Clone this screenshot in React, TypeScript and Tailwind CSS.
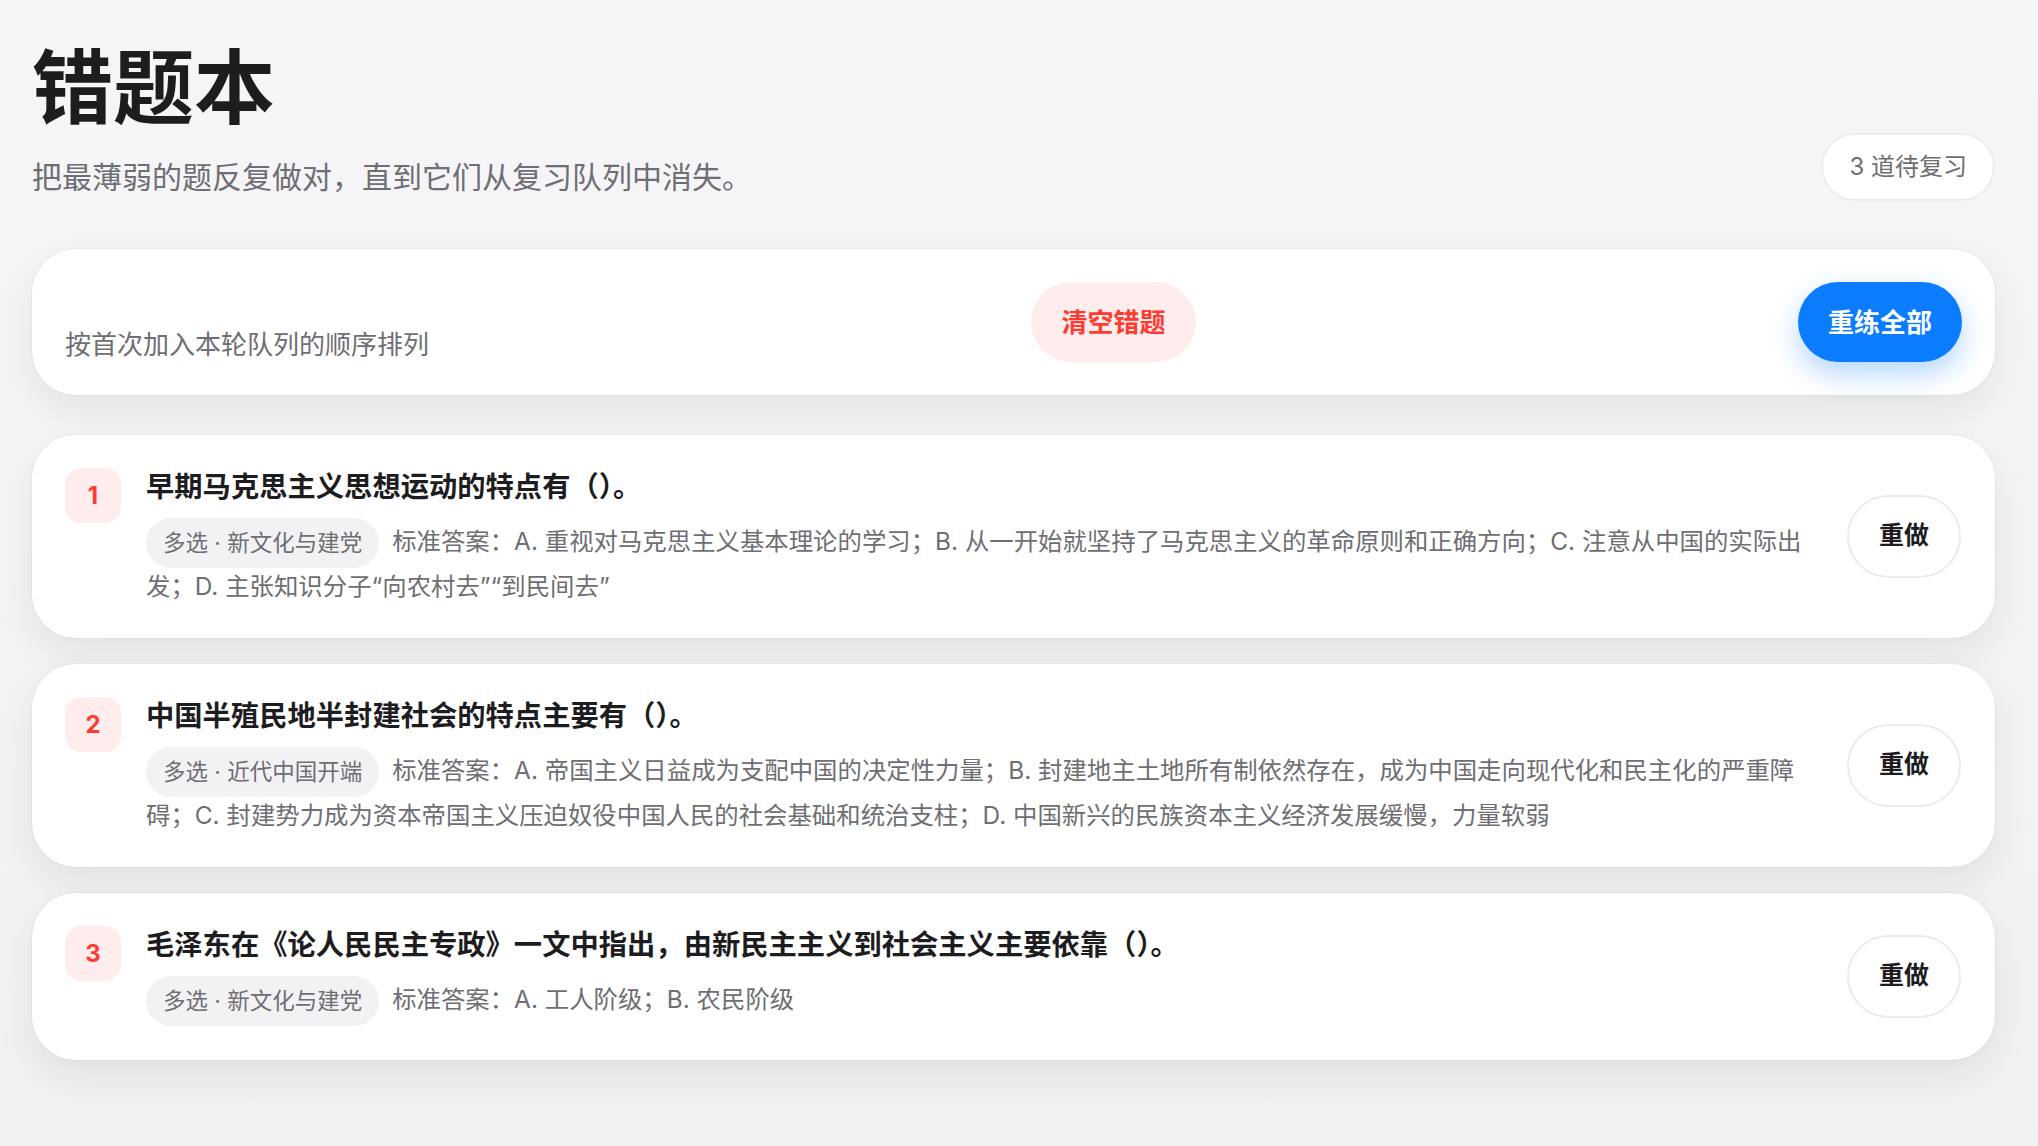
import * as React from "react"

interface Mistake {
  id: number
  title: string
  tag: string
  answer: string
}

const mistakes: Mistake[] = [
  {
    id: 1,
    title: "早期马克思主义思想运动的特点有（）。",
    tag: "多选 · 新文化与建党",
    answer:
      "标准答案：A. 重视对马克思主义基本理论的学习；B. 从一开始就坚持了马克思主义的革命原则和正确方向；C. 注意从中国的实际出发；D. 主张知识分子“向农村去”“到民间去”",
  },
  {
    id: 2,
    title: "中国半殖民地半封建社会的特点主要有（）。",
    tag: "多选 · 近代中国开端",
    answer:
      "标准答案：A. 帝国主义日益成为支配中国的决定性力量；B. 封建地主土地所有制依然存在，成为中国走向现代化和民主化的严重障碍；C. 封建势力成为资本帝国主义压迫奴役中国人民的社会基础和统治支柱；D. 中国新兴的民族资本主义经济发展缓慢，力量软弱",
  },
  {
    id: 3,
    title: "毛泽东在《论人民民主专政》一文中指出，由新民主主义到社会主义主要依靠（）。",
    tag: "多选 · 新文化与建党",
    answer: "标准答案：A. 工人阶级；B. 农民阶级",
  },
]

const cardShadow = "shadow-[0_16px_40px_rgba(0,0,0,0.07),0_0_0_1px_rgba(0,0,0,0.03)]"

function MistakeCard({ item }: { item: Mistake }) {
  return (
    <div className={`flex items-center gap-[36px] rounded-[44px] bg-white pl-[33px] pr-[34px] pt-[33px] pb-[34px] ${cardShadow}`}>
      <div className="flex min-w-0 flex-1 items-start gap-[25px]">
        {/* index badge */}
        <div className="flex h-[55px] w-[56px] shrink-0 items-center justify-center rounded-[16px] bg-[#ffeded] text-[24px] font-bold text-[#ff3b30]">
          {item.id}
        </div>
        <div className="min-w-0 flex-1">
          <div className="text-[28.3px] font-bold leading-[38px] text-[#1d1d1f]">{item.title}</div>
          <p className="mt-[12px] text-[24.4px] leading-[36px] text-[#6e6e73]">
            <span className="mr-[13px] inline-flex h-[50px] items-center rounded-full bg-[#f2f2f5] px-[17px] align-middle text-[22.5px]">
              {item.tag}
            </span>
            {item.answer}
          </p>
        </div>
      </div>
      <button className="flex h-[83px] shrink-0 items-center justify-center rounded-full border-2 border-[#ececf0] bg-white px-[30px] text-[25px] font-bold text-[#1d1d1f]">
        重做
      </button>
    </div>
  )
}

export default function App() {
  return (
    <div
      className="min-h-screen bg-gradient-to-b from-[#f6f6f8] to-[#f1f1f3] pl-[32px] pr-[43px] pt-[48px] pb-[60px]"
      style={{ fontFamily: '"Inter", "Noto Sans CJK SC", sans-serif' }}
    >
      <header className="flex items-end justify-between">
        <div>
          <h1 className="text-[81px] font-bold leading-none text-[#1d1d1f]">错题本</h1>
          <p className="mt-[28px] text-[30px] leading-[40px] text-[#6e6e73]">
            把最薄弱的题反复做对，直到它们从复习队列中消失。
          </p>
        </div>
        <span className="-mb-[4px] flex h-[68px] items-center rounded-full border-2 border-[#ececf0] bg-white px-[26px] text-[24px] text-[#6e6e73]">
          3 道待复习
        </span>
      </header>

      {/* toolbar */}
      <section className={`mt-[52px] flex h-[146px] items-center justify-between rounded-[44px] bg-white px-[33px] ${cardShadow}`}>
        <p className="mb-[32px] self-end text-[26px] leading-[36px] text-[#6e6e73]">按首次加入本轮队列的顺序排列</p>
        <button className="flex h-[80px] items-center rounded-full bg-[#ffeded] px-[30px] text-[26px] font-bold text-[#ff3b30]">
          清空错题
        </button>
        <button className="flex h-[80px] items-center rounded-full bg-[#0a7cff] px-[30px] text-[26px] font-bold text-white shadow-[0_12px_28px_rgba(0,122,255,0.3)]">
          重练全部
        </button>
      </section>

      <div className="mt-[40px] flex flex-col gap-[26px]">
        {mistakes.map((m) => (
          <MistakeCard key={m.id} item={m} />
        ))}
      </div>
    </div>
  )
}
